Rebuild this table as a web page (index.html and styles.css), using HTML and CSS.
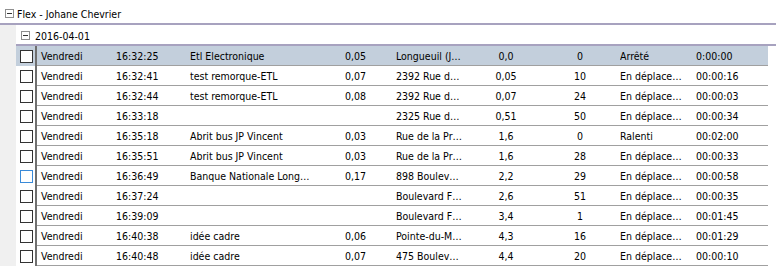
FILE: index.html
```html
<!DOCTYPE html>
<html lang="fr">
<head>
<meta charset="utf-8">
<title>Flex - Johane Chevrier</title>
<link rel="stylesheet" href="styles.css">
</head>
<body>
<div class="tree">
  <div class="root-head"><span class="toggle"></span><span class="label">Flex - Johane Chevrier</span></div>
  <div class="root-body">
    <div class="gutter"></div>
    <div class="group">
      <div class="group-head"><span class="toggle"></span><span class="label">2016-04-01</span></div>
      <div class="rows">
        <div class="row selected"><div class="chk"><span class="box"></span></div><div class="cells"><span class="c">Vendredi</span><span class="c">16:32:25</span><span class="c">Etl Electronique</span><span class="c">0,05</span><span class="c">Longueuil (J…</span><span class="c mid">0,0</span><span class="c mid">0</span><span class="c st">Arrêté</span><span class="c">0:00:00</span></div></div>
        <div class="row"><div class="chk"><span class="box"></span></div><div class="cells"><span class="c">Vendredi</span><span class="c">16:32:41</span><span class="c">test remorque-ETL</span><span class="c">0,07</span><span class="c">2392 Rue d…</span><span class="c mid">0,05</span><span class="c mid">10</span><span class="c st">En déplace…</span><span class="c">00:00:16</span></div></div>
        <div class="row"><div class="chk"><span class="box"></span></div><div class="cells"><span class="c">Vendredi</span><span class="c">16:32:44</span><span class="c">test remorque-ETL</span><span class="c">0,08</span><span class="c">2392 Rue d…</span><span class="c mid">0,07</span><span class="c mid">24</span><span class="c st">En déplace…</span><span class="c">00:00:03</span></div></div>
        <div class="row"><div class="chk"><span class="box"></span></div><div class="cells"><span class="c">Vendredi</span><span class="c">16:33:18</span><span class="c"></span><span class="c"></span><span class="c">2325 Rue d…</span><span class="c mid">0,51</span><span class="c mid">50</span><span class="c st">En déplace…</span><span class="c">00:00:34</span></div></div>
        <div class="row"><div class="chk"><span class="box"></span></div><div class="cells"><span class="c">Vendredi</span><span class="c">16:35:18</span><span class="c">Abrit bus JP Vincent</span><span class="c">0,03</span><span class="c">Rue de la Pr…</span><span class="c mid">1,6</span><span class="c mid">0</span><span class="c st">Ralenti</span><span class="c">00:02:00</span></div></div>
        <div class="row"><div class="chk"><span class="box"></span></div><div class="cells"><span class="c">Vendredi</span><span class="c">16:35:51</span><span class="c">Abrit bus JP Vincent</span><span class="c">0,03</span><span class="c">Rue de la Pr…</span><span class="c mid">1,6</span><span class="c mid">28</span><span class="c st">En déplace…</span><span class="c">00:00:33</span></div></div>
        <div class="row"><div class="chk"><span class="box hover"></span></div><div class="cells"><span class="c">Vendredi</span><span class="c">16:36:49</span><span class="c">Banque Nationale Long…</span><span class="c">0,17</span><span class="c">898 Boulev…</span><span class="c mid">2,2</span><span class="c mid">29</span><span class="c st">En déplace…</span><span class="c">00:00:58</span></div></div>
        <div class="row"><div class="chk"><span class="box"></span></div><div class="cells"><span class="c">Vendredi</span><span class="c">16:37:24</span><span class="c"></span><span class="c"></span><span class="c">Boulevard F…</span><span class="c mid">2,6</span><span class="c mid">51</span><span class="c st">En déplace…</span><span class="c">00:00:35</span></div></div>
        <div class="row"><div class="chk"><span class="box"></span></div><div class="cells"><span class="c">Vendredi</span><span class="c">16:39:09</span><span class="c"></span><span class="c"></span><span class="c">Boulevard F…</span><span class="c mid">3,4</span><span class="c mid">1</span><span class="c st">En déplace…</span><span class="c">00:01:45</span></div></div>
        <div class="row"><div class="chk"><span class="box"></span></div><div class="cells"><span class="c">Vendredi</span><span class="c">16:40:38</span><span class="c">idée cadre</span><span class="c">0,06</span><span class="c">Pointe-du-M…</span><span class="c mid">4,3</span><span class="c mid">16</span><span class="c st">En déplace…</span><span class="c">00:01:29</span></div></div>
        <div class="row"><div class="chk"><span class="box"></span></div><div class="cells"><span class="c">Vendredi</span><span class="c">16:40:48</span><span class="c">idée cadre</span><span class="c">0,07</span><span class="c">475 Boulev…</span><span class="c mid">4,4</span><span class="c mid">20</span><span class="c st">En déplace…</span><span class="c">00:00:10</span></div></div>
      </div>
    </div>
  </div>
</div>
</body>
</html>
```
FILE: styles.css
```css
* { box-sizing: border-box; }
html, body { margin: 0; padding: 0; background: #fff; }
body {
  width: 776px;
  height: 266px;
  overflow: hidden;
  font-family: "DejaVu Sans Condensed", "DejaVu Sans", sans-serif;
  font-size: 10.5px;
  color: #000;
}
.tree { display: flex; flex-direction: column; }
.root-head {
  height: 25px;
  padding: 4px 0 0 5px;
  display: flex;
  align-items: center;
  gap: 3px;
  border-bottom: 2px solid #a7a2bf;
}
.toggle {
  position: relative;
  width: 9px;
  height: 9px;
  border: 1px solid #8f8f8f;
  background: #fff;
  flex: none;
}
.toggle::after {
  content: "";
  position: absolute;
  left: 1px;
  top: 3px;
  width: 5px;
  height: 1px;
  background: #333;
}
.root-body { display: flex; }
.gutter { width: 16px; background: #f0f0f0; flex: none; }
.group { flex: 1; display: flex; flex-direction: column; }
.group-head {
  height: 21px;
  padding: 2px 0 0 5px;
  display: flex;
  align-items: center;
  gap: 5px;
  border-bottom: 2px solid #a7a2bf;
}
.rows { width: 752px; display: flex; flex-direction: column; }
.row { display: flex; height: 20px; }
.row.selected { background: #c3cfdc; }
.chk {
  width: 21px;
  border-right: 2px solid #6f6f6f;
  display: flex;
  align-items: center;
  padding-left: 4px;
  flex: none;
}
.box {
  width: 13px;
  height: 13px;
  border: 1px solid #333;
  background: #fff;
}
.box.hover { border-color: #3a8ad8; }
.cells {
  flex: 1;
  display: grid;
  grid-template-columns: 75px 74px 155px 51px 80px 68px 80px 72px 76px;
  align-items: center;
  border-bottom: 1px solid #a0a0a0;
}
.c { padding-left: 4px; white-space: nowrap; overflow: hidden; }
.c.mid { padding-left: 0; text-align: center; }
.c.st { padding-left: 0; }
```
